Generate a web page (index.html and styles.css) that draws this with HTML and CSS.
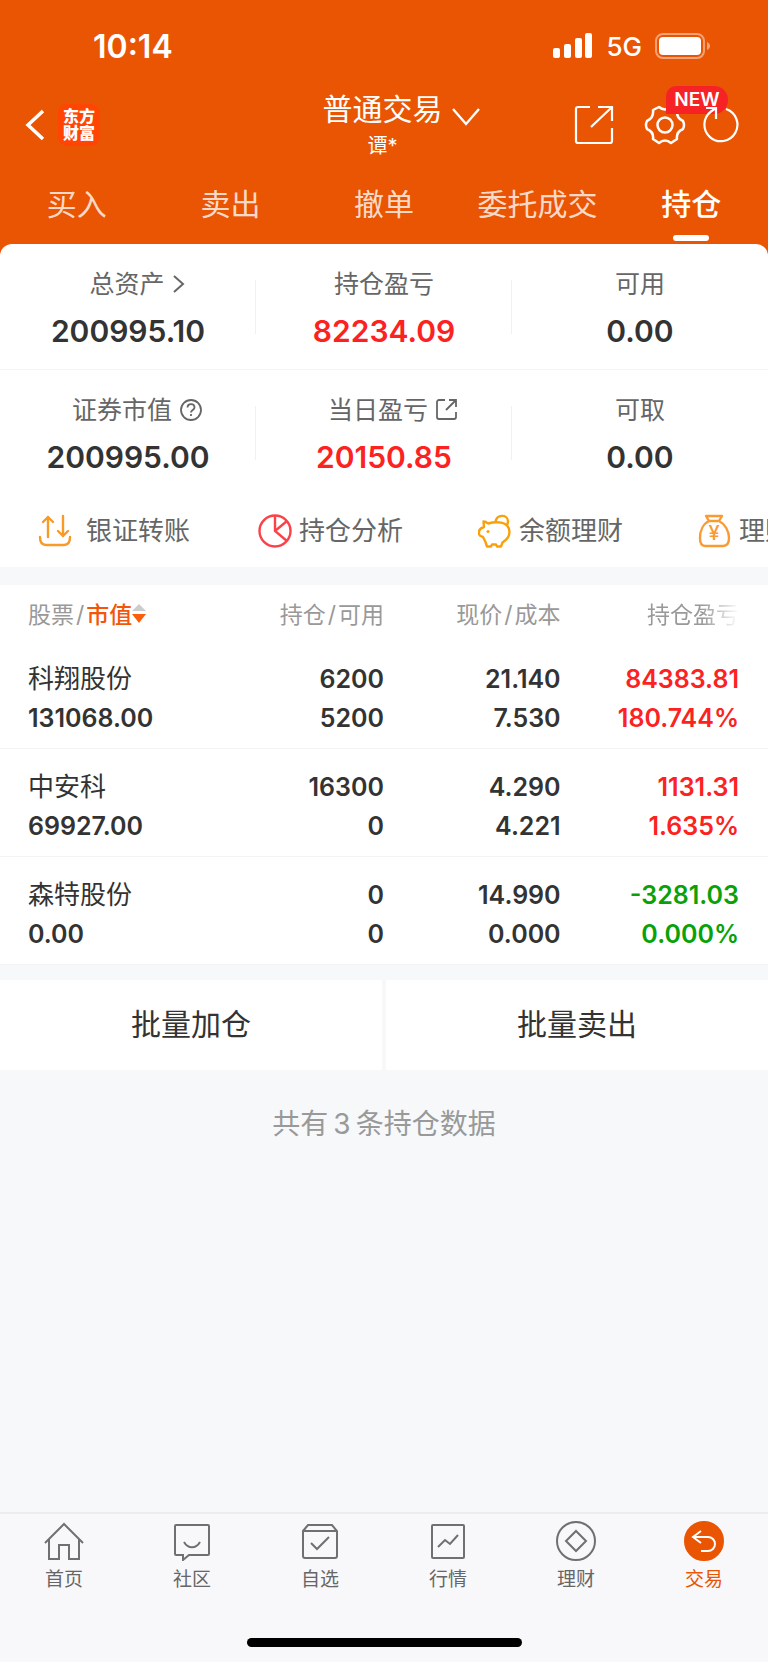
FILE: index.html
```html
<!DOCTYPE html>
<html lang="zh-CN">
<head>
    <meta charset="UTF-8">
    <meta name="viewport" content="width=device-width, initial-scale=1.0">
    <title>普通交易 - 持仓</title>
    <link rel="stylesheet" href="styles.css">
</head>
<body>
    <div class="top">
        <div class="status-bar">
            <span class="clock">10:14</span>
            <div class="status-icons">
                <svg width="40" height="26" viewBox="0 0 40 26" fill="#fff">
                    <rect x="0" y="15" width="7" height="10" rx="2"/>
                    <rect x="11" y="11" width="7" height="14" rx="2"/>
                    <rect x="22" y="5" width="7" height="20" rx="2"/>
                    <rect x="32" y="0" width="7" height="25" rx="2"/>
                </svg>
                <span class="network">5G</span>
                <svg width="56" height="26" viewBox="0 0 56 26">
                    <rect x="1" y="1" width="48" height="24" rx="7" fill="none" stroke="#fff" stroke-opacity=".45" stroke-width="2"/>
                    <rect x="4" y="4" width="42" height="18" rx="4" fill="#fff"/>
                    <path d="M52 9c4 1.5 4 6.5 0 8z" fill="#fff" fill-opacity=".45"/>
                </svg>
            </div>
        </div>

        <header class="app-bar">
            <div class="app-bar-left">
                <button class="icon-btn" type="button" aria-label="返回">
                    <svg width="20" height="32" viewBox="0 0 20 32" fill="none" stroke="#fff" stroke-width="3.5">
                        <path d="M18 2 3 16l15 14"/>
                    </svg>
                </button>
                <div class="logo">东方<br>财富</div>
            </div>
            <button class="account" type="button">
                <span class="account-title">
                    普通交易
                    <svg width="28" height="18" viewBox="0 0 28 18" fill="none" stroke="#fff" stroke-width="2.4">
                        <path d="M1 1l13 15L27 1"/>
                    </svg>
                </span>
                <span class="account-name">谭*</span>
            </button>
            <div class="app-bar-right">
                <button class="icon-btn share-btn" type="button" aria-label="分享">
                    <svg width="40" height="40" viewBox="0 0 40 40" fill="none" stroke="#fff" stroke-width="2.2">
                        <path d="M16 2H4a2 2 0 0 0-2 2v32a2 2 0 0 0 2 2h32a2 2 0 0 0 2-2V23M24 2h14v14M38 2 17 22"/>
                    </svg>
                </button>
                <button class="icon-btn gear-btn" type="button" aria-label="设置">
                    <svg width="42" height="42" viewBox="0 0 42 42" fill="none" stroke="#fff" stroke-width="2.5" stroke-linejoin="round">
                        <path d="M15 3Q21 8 27 3L33 6Q32 14 39 17Q41 21 39 25Q32 28 33 35L27 39Q21 34 15 39L9 35Q10 28 3 25Q1 21 3 17Q10 14 9 6Z"/>
                        <circle cx="21" cy="21" r="7.5"/>
                    </svg>
                    <span class="badge">NEW</span>
                </button>
                <button class="icon-btn refresh-btn" type="button" aria-label="刷新">
                    <svg width="38" height="42" viewBox="0 0 38 42" fill="none" stroke="#fff" stroke-width="2.2">
                        <path d="M24 5A16.5 16.5 0 1 1 9 7.500L14 4M4 4h10v11"/>
                    </svg>
                </button>
            </div>
        </header>

        <nav class="tabs">
            <a class="tab" href="#">买入</a>
            <a class="tab" href="#">卖出</a>
            <a class="tab" href="#">撤单</a>
            <a class="tab" href="#">委托成交</a>
            <a class="tab active" href="#">持仓</a>
        </nav>

        <section class="summary">
            <div class="summary-row">
                <div class="cell">
                    <a class="cell-label with-icon" href="#">总资产
                        <svg width="12" height="18" viewBox="0 0 12 18" fill="none" stroke="#666" stroke-width="2">
                            <path d="M1 1l9 8-9 8"/>
                        </svg>
                    </a>
                    <div class="cell-value">200995.10</div>
                </div>
                <div class="cell">
                    <div class="cell-label">持仓盈亏</div>
                    <div class="cell-value up">82234.09</div>
                </div>
                <div class="cell">
                    <div class="cell-label">可用</div>
                    <div class="cell-value">0.00</div>
                </div>
            </div>
            <div class="summary-row">
                <div class="cell">
                    <a class="cell-label with-icon" href="#">证券市值
                        <svg width="22" height="22" viewBox="0 0 22 22" fill="none" stroke="#666" stroke-width="1.8">
                            <circle cx="11" cy="11" r="10"/>
                            <path d="M7.500 8.500c0-4.500 7-4.500 7 0 0 2.500-3.500 2.500-3.500 5M11 15v2"/>
                        </svg>
                    </a>
                    <div class="cell-value">200995.00</div>
                </div>
                <div class="cell">
                    <a class="cell-label with-icon" href="#">当日盈亏
                        <svg width="22" height="22" viewBox="0 0 22 22" fill="none" stroke="#666" stroke-width="1.8">
                            <path d="M9 1H3a2 2 0 0 0-2 2v15a2 2 0 0 0 2 2h15a2 2 0 0 0 2-2v-5M13 1h7v7M20 1 10 11"/>
                        </svg>
                    </a>
                    <div class="cell-value up">20150.85</div>
                </div>
                <div class="cell">
                    <div class="cell-label">可取</div>
                    <div class="cell-value">0.00</div>
                </div>
            </div>

            <div class="shortcuts">
                <a class="shortcut wide" href="#">
                    <svg width="34" height="34" viewBox="0 0 34 34" fill="none" stroke="#f79a28" stroke-width="2.4" stroke-linecap="round" stroke-linejoin="round">
                        <path d="M2 23c0 6 2 8 6 8h18c4 0 6-2 6-8M10 23V3M5 8l5-5 5 5M25 2v20M20 17l5 5 5-5"/>
                    </svg>
                    银证转账
                </a>
                <a class="shortcut" href="#">
                    <svg width="34" height="34" viewBox="0 0 34 34" fill="none" stroke="#fa4248" stroke-width="2.4">
                        <circle cx="17" cy="17" r="15.5"/>
                        <path d="M29 27 17 17V2M17 17 29 7"/>
                    </svg>
                    持仓分析
                </a>
                <a class="shortcut" href="#">
                    <svg width="34" height="34" viewBox="0 0 34 34" fill="none" stroke="#f9a10b" stroke-width="2.4" stroke-linejoin="round">
                        <path d="M5.500 7.500q2.500 0 4.500 2c7-2 21-3 21.500 8.500 0 4.500-3 8-7 10.500L23 32.500h-4l-1-2h-4l-1 2H9L7.500 28 5 23q-4-1-4-3v-3q1-3 5-4z"/>
                        <path d="M17.500 8c1-8 12-8 12.500-1 0 2-.5 3.500-1.500 5"/>
                        <circle cx="10" cy="17.500" r="1.500" fill="#f9a10b" stroke="none"/>
                    </svg>
                    余额理财
                </a>
                <a class="shortcut" href="#">
                    <svg width="34" height="34" viewBox="0 0 34 34" fill="none" stroke="#fa9a32" stroke-width="2.4" stroke-linejoin="round">
                        <path d="M8 2h16l-3 5H11zM11 7C5 10 2 17 2 24c0 5 1 8 5 8h18c4 0 6-3 6-8 0-7-4-14-10-17"/>
                        <text class="yen" x="16" y="26">¥</text>
                    </svg>
                    理财产品
                </a>
            </div>
        </section>
    </div>

    <main class="content">
        <table class="holdings">
            <thead>
                <tr>
                    <th>股票<span class="slash">/</span><button class="sort-btn" type="button">市值<svg width="14" height="20" viewBox="0 0 14 20">
                        <path d="M7 1l7 7H0z" fill="#ccc"/>
                        <path d="M0 11h14l-7 9z" fill="#fa5d0c"/>
                    </svg></button></th>
                    <th>持仓<span class="slash">/</span>可用</th>
                    <th>现价<span class="slash">/</span>成本</th>
                    <th><span class="fade">持仓盈亏</span></th>
                </tr>
            </thead>
            <tbody>
                <tr>
                    <td><span class="stock">科翔股份</span><br>131068.00</td>
                    <td>6200<br>5200</td>
                    <td>21.140<br>7.530</td>
                    <td class="up">84383.81<br>180.744%</td>
                </tr>
                <tr>
                    <td><span class="stock">中安科</span><br>69927.00</td>
                    <td>16300<br>0</td>
                    <td>4.290<br>4.221</td>
                    <td class="up">1131.31<br>1.635%</td>
                </tr>
                <tr>
                    <td><span class="stock">森特股份</span><br>0.00</td>
                    <td>0<br>0</td>
                    <td>14.990<br>0.000</td>
                    <td class="down">-3281.03<br>0.000%</td>
                </tr>
            </tbody>
        </table>

        <div class="batch">
            <button class="batch-btn" type="button">批量加仓</button>
            <button class="batch-btn" type="button">批量卖出</button>
        </div>

        <p class="total">共有<span class="count">3</span>条持仓数据</p>
    </main>

    <footer class="bottom">
        <nav class="bottom-nav">
            <a class="nav-item" href="#">
                <svg width="40" height="40" viewBox="0 0 40 40">
                    <path d="M1 22 20 3l19 19M5 18v20h10V24h10v14h10V18"/>
                </svg>
                首页
            </a>
            <a class="nav-item" href="#">
                <svg width="40" height="40" viewBox="0 0 40 40">
                    <path d="M4 4h32a1 1 0 0 1 1 1v28a1 1 0 0 1-1 1H17l-6 5v-5H4a1 1 0 0 1-1-1V5a1 1 0 0 1 1-1zM12 21c4 7 12 7 16 0"/>
                </svg>
                社区
            </a>
            <a class="nav-item" href="#">
                <svg width="40" height="40" viewBox="0 0 40 40">
                    <path d="M3 10l5-6h24l5 6v25a2 2 0 0 1-2 2H5a2 2 0 0 1-2-2zM3 10h34M11 22l6 6 12-12"/>
                </svg>
                自选
            </a>
            <a class="nav-item" href="#">
                <svg width="40" height="40" viewBox="0 0 40 40">
                    <rect x="4" y="4" width="32" height="33" rx="1"/>
                    <path d="M10 26l7-7 5 4 8-9"/>
                </svg>
                行情
            </a>
            <a class="nav-item" href="#">
                <svg width="40" height="40" viewBox="0 0 40 40">
                    <circle cx="20" cy="20" r="19"/>
                    <path d="M20 10l10 10-10 10-10-10z"/>
                </svg>
                理财
            </a>
            <a class="nav-item active" href="#">
                <svg width="40" height="40" viewBox="0 0 40 40">
                    <circle cx="20" cy="20" r="19"/>
                    <path d="M17 10l-8 6 8 6M9 16h15a7 7 0 0 1 0 14h-7"/>
                </svg>
                交易
            </a>
        </nav>
        <div class="home-indicator"></div>
    </footer>
</body>
</html>
```

FILE: styles.css
```css
* {
    box-sizing: border-box;
}

body {
    margin: 0;
    min-height: 100vh;
    display: flex;
    flex-direction: column;
    background-color: #f6f8fa;
    color: #333;
    font-family: Inter, "Noto Sans CJK SC", sans-serif;
}

a {
    color: inherit;
    text-decoration: none;
}

button {
    margin: 0;
    padding: 0;
    border: none;
    background: none;
    color: inherit;
    font: inherit;
    cursor: pointer;
}

svg {
    display: block;
    flex-shrink: 0;
}

.up {
    color: #fc2222;
}

.down {
    color: #08a208;
}

/* Header */
.top {
    background-color: #ea5504;
    color: #fff;
}

.status-bar {
    display: flex;
    justify-content: space-between;
    align-items: center;
    height: 92px;
    padding: 0 57px 0 93px;
}

.clock {
    font-size: 32px;
    font-weight: 600;
}

.status-icons {
    display: flex;
    align-items: center;
    gap: 13px;
}

.network {
    font-size: 26px;
    font-weight: 500;
}

.app-bar {
    display: grid;
    grid-template-columns: 1fr auto 1fr;
    align-items: center;
    padding: 0 28px 0 25px;
}

.app-bar-left {
    display: flex;
    align-items: center;
    gap: 13px;
}

.logo {
    width: 42px;
    height: 42px;
    padding: 4px 5px;
    border-radius: 9px;
    background-color: #ff4404;
    font-size: 16px;
    font-weight: 900;
    line-height: 17px;
}

.account {
    display: flex;
    flex-direction: column;
    align-items: center;
    gap: 8px;
}

.account-title {
    display: flex;
    align-items: center;
    gap: 9px;
    padding-left: 37px;
    font-size: 30px;
    line-height: 34px;
}

.account-title svg {
    margin-top: 16px;
}

.account-name {
    font-size: 20px;
    line-height: 24px;
}

.app-bar-right {
    display: flex;
    justify-content: flex-end;
    align-items: center;
    gap: 16px;
}

.share-btn {
    margin-right: 14px;
}

.gear-btn {
    position: relative;
}

/* keeps the refresh arrow above the NEW badge */
.refresh-btn {
    position: relative;
}

.badge {
    position: absolute;
    top: -18px;
    left: 22px;
    width: 62px;
    border-radius: 10px 14px 14px 0;
    background-color: #f62226;
    font-size: 19px;
    font-weight: 600;
    line-height: 28px;
    text-align: center;
}

.tabs {
    display: grid;
    grid-template-columns: repeat(5, 1fr);
    padding: 24px 0 3px;
}

.tab {
    display: flex;
    flex-direction: column;
    align-items: center;
    gap: 9px;
    color: rgba(255, 255, 255, 0.8);
    font-size: 30px;
    line-height: 44px;
}

.tab::after {
    content: "";
    width: 36px;
    height: 6px;
    border-radius: 3px;
}

.tab.active {
    color: #fff;
    font-weight: 500;
}

.tab.active::after {
    background-color: #fff;
}

/* Asset summary */
.summary {
    border-radius: 12px 12px 0 0;
    background-color: #fff;
    color: #333;
}

.summary-row {
    display: grid;
    grid-template-columns: repeat(3, 1fr);
}

.summary-row:first-child {
    border-bottom: 1px solid #f3f4f6;
}

.cell {
    display: flex;
    flex-direction: column;
    align-items: center;
    gap: 13px;
    padding: 24px 0 20px;
    background: linear-gradient(#f0f1f3, #f0f1f3) no-repeat right center / 1px 54px;
}

.cell:last-child {
    background: none;
}

.cell-label {
    display: flex;
    align-items: center;
    gap: 8px;
    color: #666;
    font-size: 25px;
    line-height: 32px;
}

.with-icon {
    padding-left: 18px;
}

.cell-value {
    font-size: 30px;
    font-weight: 600;
    line-height: 36px;
}

.shortcuts {
    display: flex;
    height: 72px;
    padding-left: 38px;
    overflow: hidden;
}

.shortcut {
    flex: 0 0 220px;
    display: flex;
    align-items: center;
    gap: 7px;
    color: #666;
    font-size: 26px;
    line-height: 32px;
    white-space: nowrap;
}

.shortcut.wide {
    gap: 14px;
}

.yen {
    fill: #fa9a32;
    stroke: none;
    font-size: 20px;
    font-weight: 500;
    text-anchor: middle;
}

/* Holdings */
.content {
    flex: 1;
    padding-top: 18px;
}

.holdings {
    width: 100%;
    table-layout: fixed;
    border-collapse: collapse;
    background-color: #fff;
}

.holdings th {
    height: 56px;
    padding: 0;
    color: #999;
    font-size: 23px;
    font-weight: 400;
    text-align: right;
    white-space: nowrap;
}

.holdings td {
    padding: 18px 0 10px;
    border-bottom: 1px solid #f3f4f6;
    font-size: 25px;
    font-weight: 600;
    line-height: 39px;
    text-align: right;
}

.holdings th:first-child,
.holdings td:first-child {
    width: 28%;
    padding-left: 28px;
    text-align: left;
}

.holdings th:nth-child(2) {
    width: 22%;
}

.holdings th:nth-child(3) {
    width: 23%;
}

.holdings th:last-child,
.holdings td:last-child {
    padding-right: 29px;
}

.slash {
    padding: 0 2px;
}

.sort-btn {
    display: inline-flex;
    align-items: center;
    color: #f2560a;
    font-weight: 500;
}

.fade {
    -webkit-mask-image: linear-gradient(to right, #000 60%, transparent);
    mask-image: linear-gradient(to right, #000 60%, transparent);
}

.stock {
    font-size: 26px;
    font-weight: 400;
}

.batch {
    display: grid;
    grid-template-columns: 1fr 1fr;
    gap: 4px;
    margin-top: 15px;
}

.batch-btn {
    padding: 24px 0 26px;
    background-color: #fff;
    font-size: 30px;
    line-height: 40px;
}

.total {
    margin: 34px 0;
    color: #999;
    font-size: 28px;
    line-height: 40px;
    text-align: center;
}

.count {
    padding: 0 5px;
}

/* Bottom navigation */
.bottom {
    padding-bottom: 15px;
    border-top: 2px solid #ebecee;
    background-color: #f8f8fb;
}

.bottom-nav {
    display: grid;
    grid-template-columns: repeat(6, 1fr);
    padding: 7px 0 46px;
}

.nav-item {
    display: flex;
    flex-direction: column;
    align-items: center;
    gap: 7px;
    color: #666;
    font-size: 19px;
    line-height: 24px;
}

.nav-item svg {
    fill: none;
    stroke: #707070;
    stroke-width: 2;
}

.nav-item.active {
    color: #ea5504;
}

.nav-item.active svg {
    stroke: #fff;
}

.nav-item.active circle {
    fill: #ea5504;
    stroke: #ea5504;
}

.home-indicator {
    width: 275px;
    height: 9px;
    margin: 0 auto;
    border-radius: 5px;
    background-color: #000;
}
```
